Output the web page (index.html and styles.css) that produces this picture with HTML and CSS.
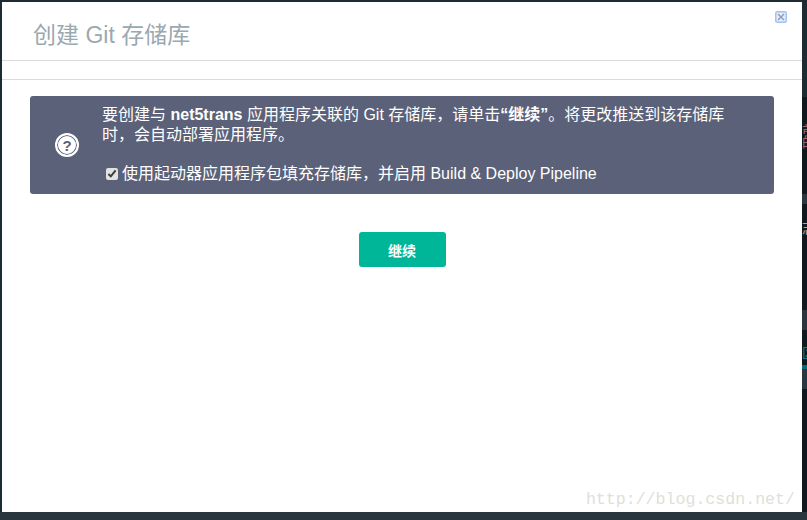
FILE: index.html
```html
<!DOCTYPE html>
<html lang="zh-CN">
<head>
  <meta charset="UTF-8" />
  <title>创建 Git 存储库</title>
  <link rel="stylesheet" href="styles.css">
</head>
<body>

<div class="stage">
  <div class="modal">
    <svg class="close-icon" width="12" height="12" viewBox="0 0 12 12" aria-label="关闭">
      <rect x="0.75" y="0.75" width="10.5" height="10.5" rx="1.5" fill="#e4edfb" stroke="#a0c2f7" stroke-width="1.5"/>
      <path d="M3 3l6 6M9 3l-6 6" fill="none" stroke="#8d9bb0" stroke-width="1.4"/>
    </svg>

    <div class="modal-header">
      <h2>创建 Git 存储库</h2>
    </div>
    <div class="header-gap"></div>

    <div class="modal-body">
      <div class="alert">
        <div class="alert-icon">
          <span class="help-circle">?</span>
        </div>
        <div class="alert-text">
          <p>要创建与 <b>net5trans</b> 应用程序关联的 Git 存储库，请单击<b>“继续”</b>。将更改推送到该存储库时，会自动部署应用程序。</p>
          <label class="starter">
            <input type="checkbox" checked>
            <span>使用起动器应用程序包填充存储库，并启用 Build &amp; Deploy Pipeline</span>
          </label>
        </div>
      </div>

      <div class="actions">
        <button class="btn-continue" type="button">继续</button>
      </div>
    </div>

    <div class="watermark">http://blog.csdn.net/</div>
  </div>

  <!-- sliver of the page behind the dialog -->
  <div class="behind">
    <div class="seg seg-top"></div>
    <div class="seg seg-a"><span class="red">前</span></div>
    <div class="seg seg-b"><span class="red">的</span></div>
    <div class="seg seg-light seg-c"></div>
    <div class="seg seg-d"><span class="grey">志</span></div>
    <div class="seg seg-e"></div>
    <div class="seg seg-light seg-f"></div>
    <div class="seg seg-g"><span class="teal">区</span></div>
    <div class="seg seg-teal"></div>
    <div class="seg seg-light seg-h"></div>
    <div class="seg seg-rest"></div>
  </div>
</div>
<div class="taskbar"></div>

</body>
</html>
```

FILE: styles.css
```css
* {
  box-sizing: border-box;
  margin: 0;
  padding: 0;
}

html, body {
  height: 100%;
  overflow: hidden;
  background: #1d2b33;
  font-family: "Liberation Sans", "Noto Sans CJK SC", sans-serif;
}

.stage {
  display: flex;
  height: 512px;
  padding: 2px 0 0 2px;
}

.taskbar {
  height: 8px;
  background: #2a363e;
}

.modal {
  position: relative;
  width: 800px;
  height: 510px;
  background: #fff;
}

.close-icon {
  position: absolute;
  top: 9px;
  right: 15px;
}

.modal-header {
  height: 59px;
  padding: 18px 31px 0;
  border-bottom: 1px solid #d9dcdc;
}

.modal-header h2 {
  font-size: 23px;
  font-weight: 400;
  line-height: 30px;
  color: #9aa8b0;
}

.header-gap {
  height: 19px;
  border-bottom: 1px solid #d9dcdc;
}

.modal-body {
  padding: 16px 28px 0;
}

.alert {
  display: flex;
  height: 98px;
  background: #5b6178;
  border-radius: 3px;
  color: #fff;
}

.alert-icon {
  display: flex;
  flex: 0 0 72px;
  align-items: center;
  justify-content: center;
  padding: 0 15px 0 17px;
}

.help-circle {
  display: flex;
  align-items: center;
  justify-content: center;
  width: 24px;
  height: 24px;
  border: 2px solid #fff;
  box-shadow: inset 0 0 0 1px #5b6178;
  border-radius: 50%;
  background: #fff;
  color: #5b6178;
  font-size: 15px;
  font-weight: 700;
}

.alert-text {
  flex: 1;
  padding: 9px 28px 0 0;
  font-size: 16px;
  line-height: 20px;
}

.starter {
  display: flex;
  align-items: center;
  margin-top: 19px;
  padding-left: 4px;
}

.starter input {
  width: 12px;
  height: 12px;
  margin-right: 4px;
  accent-color: #e2e2e2;
}

.actions {
  display: flex;
  justify-content: center;
  margin-top: 38px;
}

.btn-continue {
  width: 87px;
  height: 35px;
  border: 0;
  border-radius: 3px;
  background: #00b698;
  color: #fff;
  font-family: inherit;
  font-size: 14px;
  font-weight: 700;
}

.watermark {
  position: absolute;
  right: 7px;
  bottom: 2px;
  font-family: "Liberation Mono", monospace;
  font-size: 16.6px;
  line-height: 20px;
  color: #e0e0da;
}

.behind {
  display: flex;
  flex-direction: column;
  flex: 0 0 5px;
  height: 510px;
  overflow: hidden;
  background: #101820;
  font-size: 14px;
  line-height: 16px;
}

.seg {
  flex: none;
  overflow: hidden;
  white-space: nowrap;
}

.seg-top { height: 95px; background: #1d2b33; }
.seg-a { height: 37px; padding-top: 26px; }
.seg-b { height: 60px; padding-top: 0; }
.seg-light { background: #2a3640; }
.seg-c { height: 10px; }
.seg-d { height: 50px; padding-top: 16px; }
.seg-e { height: 56px; }
.seg-f { height: 20px; }
.seg-g { height: 35px; padding-top: 15px; }
.seg-teal { height: 4px; background: #036d7d; }
.seg-h { height: 20px; }
.seg-rest { height: 123px; }

.red { color: #a06a70; }
.grey { color: #a9a9b4; }
.teal { color: #0b7f92; }
```
